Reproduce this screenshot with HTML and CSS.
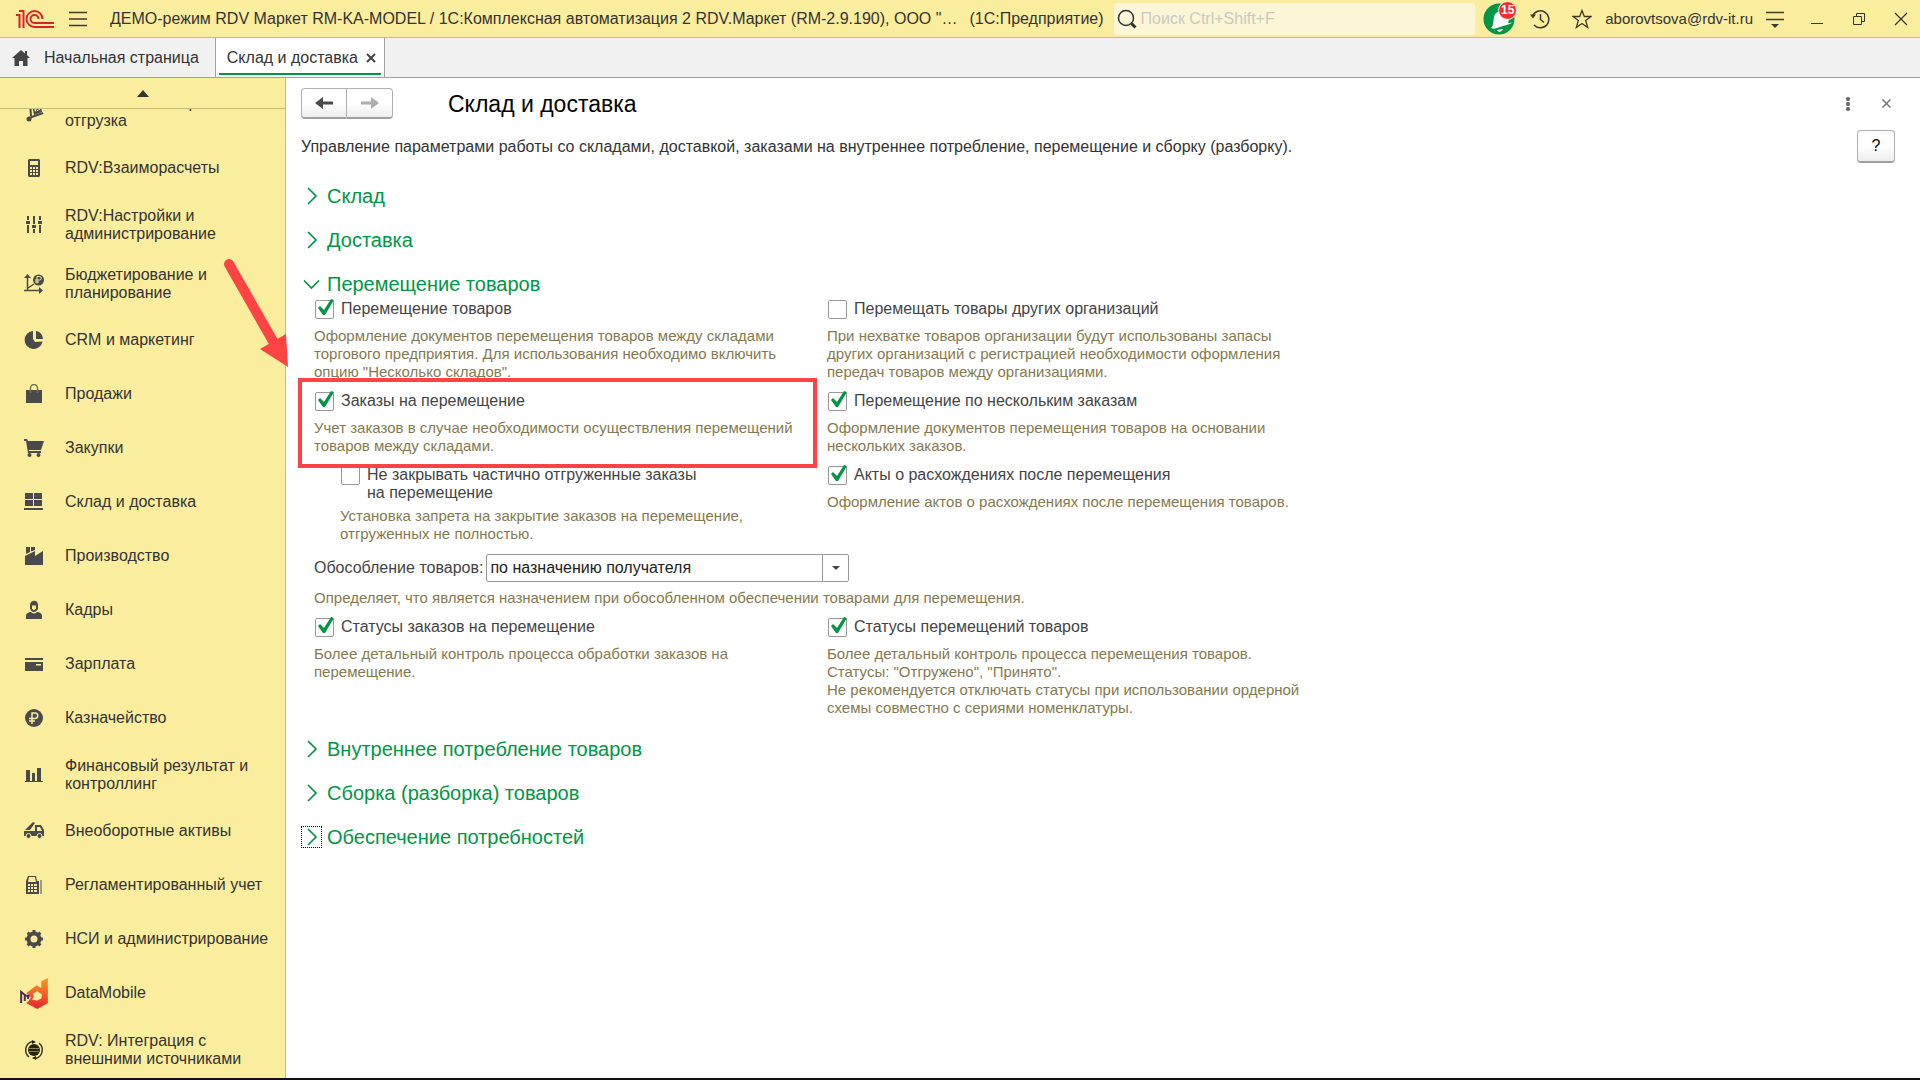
FILE: index.html
```html
<!DOCTYPE html>
<html lang="ru">
<head>
<meta charset="utf-8">
<title>Склад и доставка</title>
<link rel="stylesheet" href="styles.css">
</head>
<body>
<header class="topbar">
  <svg class="logo" viewBox="0 0 38 20" width="38" height="20" fill="none" stroke="#d8232a" stroke-width="2"><path d="M0 6h3.500V19M3 2h4.500V19"/><path d="M26.500 10a8 8 0 1 0-8 8H38"/><path d="M22.500 10a4 4 0 1 0-4 4H38"/></svg>
  <button class="icon-btn menu-btn" aria-label="Меню"><svg viewBox="0 0 18 16" width="18" height="16" stroke="#3d3a2c" stroke-width="1.500"><path d="M0 1.500h18M0 8h18M0 14.500h18"/></svg></button>
  <span class="app-title">ДЕМО-режим RDV Маркет RM-KA-MODEL / 1С:Комплексная автоматизация 2 RDV.Маркет (RM-2.9.190), ООО "…</span>
  <span class="app-kind">(1С:Предприятие)</span>
  <label class="search">
    <svg viewBox="0 0 20 20" width="20" height="20" fill="none" stroke="#333"><circle cx="9" cy="9" r="7.500" stroke-width="1.500"/><path d="m14.500 14.500 4 4" stroke-width="3"/></svg>
    <input type="text" placeholder="Поиск Ctrl+Shift+F" aria-label="Поиск">
  </label>
  <button class="icon-btn bell" aria-label="Уведомления"><svg viewBox="0 0 32 32" width="32" height="32"><circle cx="16" cy="16" r="15.500" fill="#009646"/><path d="M8 25c3-3 2-7 3-11 1-5 6-7 10-5s6 7 4 11c4 0 5-1 6-2-3 3-7 4-11 5-4 1-8 4-12 2z" fill="#fff"/><path d="M14 27c1 3 5 2 6-1z" fill="#fff"/></svg><span class="badge">15</span></button>
  <button class="icon-btn history" aria-label="История"><svg viewBox="0 0 20 20" width="20" height="20" fill="none" stroke="#3d3a2c" stroke-width="1.500"><path d="M4 16A8.500 8.500 0 1 0 2.500 7M10.500 5v5.500l3.500 3"/><path d="M0 5.500h6l-3 4z" fill="#3d3a2c" stroke="none"/></svg></button>
  <button class="icon-btn star" aria-label="Избранное"><svg viewBox="0 0 20 20" width="20" height="20" fill="none" stroke="#3d3a2c" stroke-width="1.300"><path d="m10 1.500 2.300 6h6.700l-5.300 4 2 7-5.700-4-5.700 4 2-7-5.300-4h6.700z"/></svg></button>
  <span class="user">aborovtsova@rdv-it.ru</span>
  <button class="icon-btn options" aria-label="Настройки"><svg viewBox="0 0 18 18" width="18" height="18"><path d="M0 2.500h18M0 9.500h18" stroke="#3d3a2c" stroke-width="1.500"/><path d="M5 14h8l-4 4z" fill="#3d3a2c"/></svg></button>
  <div class="window-btns">
    <button class="icon-btn" aria-label="Свернуть"><svg viewBox="0 0 14 14" width="14" height="14"><path d="M1 11.500h12" stroke="#3d3a2c"/></svg></button>
    <button class="icon-btn" aria-label="Восстановить"><svg viewBox="0 0 14 14" width="14" height="14" fill="none" stroke="#333"><path d="M1.500 4.500h8v8h-8zM4.500 4V1.500h8v8H10"/></svg></button>
    <button class="icon-btn" aria-label="Закрыть"><svg viewBox="0 0 14 14" width="14" height="14" stroke="#333" stroke-width="1.200"><path d="m1 1 12 12M13 1 1 13"/></svg></button>
  </div>
</header>
<nav class="tabs">
  <a class="tab home" href="#"><svg viewBox="0 0 18 16" width="18" height="16" fill="#444"><path d="M9 0 0 8h2.500v8h4.500v-5h4v5h4.500V8H18l-3-3V1h-2v2.500z"/></svg>Начальная страница</a>
  <div class="tab active"><a href="#">Склад и доставка</a><button class="icon-btn" aria-label="Закрыть вкладку"><svg viewBox="0 0 10 10" width="10" height="10" stroke="#444" stroke-width="2"><path d="m1 1 8 8M9 1 1 9"/></svg></button></div>
</nav>
<div class="workspace">
  <aside class="sidebar">
    <button class="scroll-up" aria-label="Прокрутить вверх"><svg viewBox="0 0 12 7" width="12" height="7"><path d="M0 7 6 0l6 7z" fill="#333"/></svg></button>
    <nav class="sections">
      <a class="section two" href="#"><svg class="ico" viewBox="0 0 20 20"><path d="m6 0 1 14M5 16l14-5" stroke="#4a4a4a" stroke-width="2"/><circle cx="5" cy="17" r="2.500"/><path fill-rule="evenodd" d="m8 3 8-2 2 9-8 3zm2 2 1 5 5-2-1-4z"/><path d="m10 5 6 4m-1-5-4 7" stroke="#4a4a4a"/></svg><span>RDV:Заказ и сборка отгрузка</span></a>
      <a class="section" href="#"><svg class="ico" viewBox="0 0 20 20"><path fill-rule="evenodd" d="M5 1h10l1 1v16l-1 1H5l-1-1V2zm1 2v4h8V3zm0 6v2h2V9zm3 0v2h2V9zm3 0v2h2V9zm-6 3v2h2v-2zm3 0v2h2v-2zm3 0v2h2v-2zm-6 3v2h2v-2zm3 0v2h2v-2zm3 0v2h2v-2z"/></svg><span>RDV:Взаиморасчеты</span></a>
      <a class="section two" href="#"><svg class="ico" viewBox="0 0 20 20"><path d="M3 1h2v4H3zM2 6h4v3H2zM3 10h2v8H3zM9 1h2v8H9zM8 10h4v3H8zM9 14h2v4H9zM15 1h2v4h-2zM14 6h4v3h-4zM15 10h2v8h-2z"/></svg><span>RDV:Настройки и администрирование</span></a>
      <a class="section two" href="#"><svg class="ico" viewBox="0 0 20 20"><path d="M3.500 2v15M0 16.500h17M4 14l6-4" stroke="#4a4a4a" stroke-width="1.500"/><path d="m0 4 3.500-4L7 4zM15 13l4 3.500-4 3.500z"/><circle cx="14.500" cy="6" r="5.500"/><path d="M13 9.500v-7h2.500a1.500 1.500 0 0 1 0 3.500H11m0 2h4" stroke="#fbed9e" fill="none"/></svg><span>Бюджетирование и планирование</span></a>
      <a class="section" href="#"><svg class="ico" viewBox="0 0 20 20"><path d="M9 1a9 9 0 1 0 9.500 10.500L11 12 9 9z"/><path d="M12 1a8 8 0 0 1 7 8h-7z"/></svg><span>CRM и маркетинг</span></a>
      <a class="section" href="#"><svg class="ico" viewBox="0 0 20 20"><path d="M2 6h16v13H2z"/><path d="M6.500 9V4a3.500 3.500 0 0 1 7 0v5" fill="none" stroke="#77725a" stroke-width="1.500"/></svg><span>Продажи</span></a>
      <a class="section" href="#"><svg class="ico" viewBox="0 0 20 20"><path d="M0 1h3l1 2h16l-3 9H5v1h12v2H4L2 3H0z"/><circle cx="5.500" cy="17" r="2"/><circle cx="14.500" cy="17" r="2"/></svg><span>Закупки</span></a>
      <a class="section" href="#"><svg class="ico" viewBox="0 0 20 20"><path d="M1 1h8v6H1zM10 1h8v6h-8zM1 8h8v6H1zM10 8h8v6h-8zM0 16h19v2H0z"/></svg><span>Склад и доставка</span></a>
      <a class="section" href="#"><svg class="ico" viewBox="0 0 20 20"><path d="M1 19v-9l10-5v5l8-5v14zM2 1h4v5L2 8zM7 1h4v3L7 5.500z"/></svg><span>Производство</span></a>
      <a class="section" href="#"><svg class="ico" viewBox="0 0 20 20"><path d="M6 5c0-5 8-6 8 0v3c0 2-2 4-4 4S6 10 6 8zM2 19v-3c0-3 3-4 5-4 2 2 4 2 6 0 2 0 5 1 5 4v3z"/><path d="M8 5.500h4v3l-2 2-2-2z" fill="#fbed9e"/></svg><span>Кадры</span></a>
      <a class="section" href="#"><svg class="ico" viewBox="0 0 20 20"><path fill-rule="evenodd" d="M1 4h18v2H1zM1 8h18v9H1zm11 2v1.500h5V10z"/></svg><span>Зарплата</span></a>
      <a class="section" href="#"><svg class="ico" viewBox="0 0 20 20"><circle cx="10" cy="10" r="9"/><path d="M8 16V5h3.500a2.800 2.800 0 0 1 0 5.500H5M5 13h6" fill="none" stroke="#fbed9e" stroke-width="1.500"/></svg><span>Казначейство</span></a>
      <a class="section two" href="#"><svg class="ico" viewBox="0 0 20 20"><path d="M2 5h4v11H2zM8 8h3v8H8zM13 3h4v13h-4zM1 16h18v1H1z"/></svg><span>Финансовый результат и контроллинг</span></a>
      <a class="section" href="#"><svg class="ico" viewBox="0 0 20 20"><path d="m1 9 8-8 2 1-5 7z"/><path fill-rule="evenodd" d="M0 10h11V4h6l3 5v6H0zm13-4v4h5l-2-4z"/><circle cx="4.500" cy="15" r="2.500" stroke="#fbed9e"/><circle cx="15.500" cy="15" r="2.500" stroke="#fbed9e"/></svg><span>Внеоборотные активы</span></a>
      <a class="section" href="#"><svg class="ico" viewBox="0 0 20 20"><path fill-rule="evenodd" d="M4 1h8l1 5h2v13H2V6zm1 1-1 5h8l-1-5zM4 9v2h2V9zm3 0v2h2V9zm3 0v2h3V9zm-6 3v2h2v-2zm3 0v2h2v-2zm3 0v2h3v-2zm-6 3v2h2v-2zm3 0v2h2v-2zm3 0v2h3v-2zM16.500 5v14h1V5z"/></svg><span>Регламентированный учет</span></a>
      <a class="section" href="#"><svg class="ico" viewBox="0 0 20 20"><circle cx="10" cy="10" r="5.500" fill="none" stroke="#4a4a4a" stroke-width="4"/><path d="M10 1v4M10 15v4M1 10h4M15 10h4M3.600 3.600l3 3M13.400 13.400l3 3M3.600 16.400l3-3M13.400 6.600l3-3" stroke="#4a4a4a" stroke-width="3"/></svg><span>НСИ и администрирование</span></a>
      <a class="section" href="#"><svg class="ico brand" viewBox="0 0 84 94"><defs><linearGradient id="dm" x1="0" y1="0" x2="0" y2="1"><stop offset="0" stop-color="#f39a24"/><stop offset=".5" stop-color="#f0622a"/><stop offset="1" stop-color="#ea2030"/></linearGradient></defs><path fill="url(#dm)" fill-rule="evenodd" d="M64 10 84 0v76L52 94 18 76l8-6 6-10-4-8-10-6 32-24 14 8zM38 48l4 8-6 10 16 2 12-6 2-12-14-10z"/><path d="M3 76V42l14 12 12 0M14 70V54M24 64V54" stroke="#4b2a63" stroke-width="6" fill="none"/></svg><span>DataMobile</span></a>
      <a class="section two" href="#"><svg class="ico" viewBox="0 0 20 20"><circle cx="10" cy="10" r="6" fill="#25230f"/><path d="M5 8.500h10M5 11.500h10" stroke="#8b8355"/><path d="M8 1.500a9 9 0 0 0-3 15.500M12 18.500A9 9 0 0 0 15 3" fill="none" stroke="#3d3a22" stroke-width="1.500"/><path d="m8 0 4 2-4 2zM12 16v4l-4-2z" fill="#25230f"/></svg><span>RDV: Интеграция с внешними источниками</span></a>
    </nav>
  </aside>
  <main class="page">
    <div class="page-head">
      <div class="nav-btns">
        <button aria-label="Назад"><svg viewBox="0 0 18 14" width="18" height="14"><path d="M8 1v4.500h10v3H8V13L0 7z" fill="#4a4a4a"/></svg></button>
        <button aria-label="Вперед"><svg viewBox="0 0 18 14" width="18" height="14"><path d="M10 1v4.500H0v3h10V13l8-6z" fill="#adadad"/></svg></button>
      </div>
      <h1>Склад и доставка</h1>
      <button class="icon-btn more" aria-label="Еще"><svg viewBox="0 0 4 14" width="4" height="14" fill="#666"><circle cx="2" cy="2" r="2"/><circle cx="2" cy="7" r="2"/><circle cx="2" cy="12" r="2"/></svg></button>
      <button class="icon-btn close" aria-label="Закрыть"><svg viewBox="0 0 9 9" width="9" height="9" stroke="#777" stroke-width="1.500"><path d="m.5.5 8 8M8.500.5l-8 8"/></svg></button>
    </div>
    <div class="intro">
      <p>Управление параметрами работы со складами, доставкой, заказами на внутреннее потребление, перемещение и сборку (разборку).</p>
      <button class="help">?</button>
    </div>
    <div class="groups">
      <button class="group"><svg viewBox="0 0 21 22"><path d="m7 3 8 8-8 8"/></svg>Склад</button>
      <button class="group"><svg viewBox="0 0 21 22"><path d="m7 3 8 8-8 8"/></svg>Доставка</button>
      <section class="open-group">
        <button class="group"><svg viewBox="0 0 21 22"><path d="m3 7.500 7.500 7.500L18 7.500"/></svg>Перемещение товаров</button>
        <div class="settings">
          <div class="cell">
            <label class="check"><input type="checkbox" checked>Перемещение товаров</label>
            <p class="hint">Оформление документов перемещения товаров между складами<br>торгового предприятия. Для использования необходимо включить<br>опцию "Несколько складов".</p>
          </div>
          <div class="cell">
            <label class="check"><input type="checkbox">Перемещать товары других организаций</label>
            <p class="hint">При нехватке товаров организации будут использованы запасы<br>других организаций с регистрацией необходимости оформления<br>передач товаров между организациями.</p>
          </div>
          <div class="cell marked">
            <label class="check"><input type="checkbox" checked>Заказы на перемещение</label>
            <p class="hint">Учет заказов в случае необходимости осуществления перемещений<br>товаров между складами.</p>
            <div class="frame"></div>
            <svg class="pointer" viewBox="0 0 70 112" width="70" height="112"><path d="M9 7 54 86" stroke="#fe4344" stroke-width="10" stroke-linecap="round"/><path d="M68 110 40 92l26-15z" fill="#fe4344"/></svg>
          </div>
          <div class="cell">
            <label class="check"><input type="checkbox" checked>Перемещение по нескольким заказам</label>
            <p class="hint">Оформление документов перемещения товаров на основании<br>нескольких заказов.</p>
          </div>
          <div class="cell nested">
            <label class="check"><input type="checkbox"><span>Не закрывать частично отгруженные заказы<br>на перемещение</span></label>
            <p class="hint">Установка запрета на закрытие заказов на перемещение,<br>отгруженных не полностью.</p>
          </div>
          <div class="cell">
            <label class="check"><input type="checkbox" checked>Акты о расхождениях после перемещения</label>
            <p class="hint">Оформление актов о расхождениях после перемещения товаров.</p>
          </div>
          <div class="cell wide">
            <div class="field">
              <label for="separation">Обособление товаров:</label>
              <div class="combo">
                <select id="separation"><option>по назначению получателя</option></select>
                <span class="drop"><svg viewBox="0 0 8 4" width="8" height="4"><path d="M0 0h8L4 4z" fill="#444"/></svg></span>
              </div>
            </div>
            <p class="hint">Определяет, что является назначением при обособленном обеспечении товарами для перемещения.</p>
          </div>
          <div class="cell">
            <label class="check"><input type="checkbox" checked>Статусы заказов на перемещение</label>
            <p class="hint">Более детальный контроль процесса обработки заказов на<br>перемещение.</p>
          </div>
          <div class="cell">
            <label class="check"><input type="checkbox" checked>Статусы перемещений товаров</label>
            <p class="hint">Более детальный контроль процесса перемещения товаров.<br>Статусы: "Отгружено", "Принято".<br>Не рекомендуется отключать статусы при использовании ордерной<br>схемы совместно с сериями номенклатуры.</p>
          </div>
        </div>
      </section>
      <button class="group"><svg viewBox="0 0 21 22"><path d="m7 3 8 8-8 8"/></svg>Внутреннее потребление товаров</button>
      <button class="group"><svg viewBox="0 0 21 22"><path d="m7 3 8 8-8 8"/></svg>Сборка (разборка) товаров</button>
      <button class="group current"><svg viewBox="0 0 21 22"><path d="m7 3 8 8-8 8"/></svg>Обеспечение потребностей</button>
    </div>
  </main>
</div>
<footer class="edge"></footer>
</body>
</html>
```
FILE: styles.css
```css
* { box-sizing: border-box; }
body {
  margin: 0;
  height: 100vh;
  display: flex;
  flex-direction: column;
  background: #fff;
  color: #333;
  font: 16px/18px "Liberation Sans", Arial, sans-serif;
}
button, input, select { font: inherit; color: inherit; }
button { cursor: pointer; }
a { color: inherit; text-decoration: none; }
p, h1 { margin: 0; font-weight: normal; }
svg { display: block; flex: none; }
.icon-btn { border: 0; padding: 0; background: none; flex: none; }

.topbar {
  flex: none;
  height: 38px;
  display: flex;
  align-items: center;
  padding: 0 12px 0 16px;
  background: #fbed9e;
  border-bottom: 1px solid #cdbe6c;
}
.menu-btn { margin: 0 23px 0 15px; }
.app-title {
  flex: 0 1 auto;
  min-width: 0;
  overflow: hidden;
  white-space: nowrap;
  text-overflow: ellipsis;
}
.app-kind { margin: 0 10px 0 12px; white-space: nowrap; }
.search {
  flex: 1;
  min-width: 0;
  height: 32px;
  display: flex;
  align-items: center;
  gap: 4px;
  padding-left: 3px;
  border-radius: 3px;
  background: #fdf6d6;
}
.search input {
  flex: 1;
  min-width: 0;
  border: 0;
  padding: 0;
  background: none;
  outline: 0;
}
.search input::placeholder { color: #c9c9c4; opacity: 1; }
.bell { position: relative; margin: 0 15px 0 8px; }
.badge {
  position: absolute;
  top: -2px;
  right: -2px;
  width: 19px;
  height: 19px;
  border-radius: 50%;
  background: #fb2a2a;
  border: 1px solid #fff;
  color: #fff;
  font: bold 12px/17px "Liberation Sans", Arial, sans-serif;
}
.star { margin: 0 13px 0 22px; }
.user { font-size: 15px; }
.options { margin: 0 26px 0 13px; }
.window-btns { display: flex; gap: 28px; }

.tabs {
  flex: none;
  height: 40px;
  display: flex;
  background: #f1f1f1;
  border-bottom: 1px solid #a0a0a0;
}
.tab { display: flex; align-items: center; }
.home { gap: 14px; padding: 0 16px 0 12px; }
.active {
  gap: 8px;
  padding: 0 8px 0 11px;
  background: linear-gradient(#009646, #009646) 3px 35px / calc(100% - 6px) 2px no-repeat #fff;
  border: solid #a0a0a0;
  border-width: 0 1px;
}

.workspace { flex: 1; min-height: 0; display: flex; }
.sidebar {
  flex: none;
  width: 286px;
  display: flex;
  flex-direction: column;
  background: #fbed9e;
  border-right: 1px solid #c9bd7c;
}
.scroll-up {
  flex: none;
  height: 31px;
  display: flex;
  align-items: center;
  justify-content: center;
  border: 0;
  border-bottom: 1px solid #c9bd7c;
  background: none;
}
.sections {
  flex: 1;
  min-height: 0;
  overflow: hidden;
  display: flex;
  flex-direction: column;
  justify-content: flex-end;
}
.section {
  flex: none;
  height: 54px;
  display: flex;
  align-items: center;
  padding: 2px 10px 0 20px;
}
.section.two { height: 59px; padding-top: 3px; }
.ico { width: 20px; height: 20px; margin: 0 21px 0 4px; fill: #4a4a4a; }
.ico.brand { width: 28px; height: 31px; margin: 0 17px 0 0; }

.page { flex: 1; min-width: 0; padding: 10px 25px 0 15px; }
.page-head { display: flex; align-items: center; height: 31px; }
.nav-btns { display: flex; }
.nav-btns button, .help {
  display: flex;
  align-items: center;
  justify-content: center;
  padding: 0;
  border: 1px solid #b0b0b0;
  border-bottom: 2px solid #a0a0a0;
  border-radius: 4px;
  background: linear-gradient(#fff 50%, #ededed);
}
.nav-btns button { width: 46px; height: 31px; }
.nav-btns button:first-child { border-radius: 4px 0 0 4px; }
.nav-btns button:last-child { border-radius: 0 4px 4px 0; border-left: 0; }
h1 { margin-left: 55px; font-size: 23px; line-height: 28px; color: #000; flex: 1; }
.more { margin-right: 32px; }
.close { margin-right: 4px; }
.intro { display: flex; align-items: center; justify-content: space-between; margin-top: 11px; }
.help { width: 38px; height: 33px; color: #000; }

.groups { display: flex; flex-direction: column; gap: 20px; margin-top: 21px; }
.group {
  height: 24px;
  align-self: flex-start;
  display: flex;
  align-items: center;
  gap: 5px;
  padding: 0;
  border: 0;
  background: none;
  font-size: 20px;
  line-height: 24px;
  color: #009646;
  white-space: nowrap;
}
.group svg { width: 21px; height: 22px; fill: none; stroke: #009646; stroke-width: 1.7; }
.current svg { outline: 1px dotted #000; outline-offset: -1px; }

.settings {
  display: grid;
  grid-template-columns: 513px 513px;
  row-gap: 11px;
  margin-top: 4px;
  padding-left: 13px;
}
.cell { position: relative; }
.nested { padding-left: 26px; }
.nested .hint { margin-top: 5px; }
.wide { grid-column: 1 / -1; }
.wide .hint { margin-top: 7px; }
.check { display: flex; align-items: flex-start; gap: 7px; color: #444; min-height: 19px; }
.check input {
  appearance: none;
  flex: none;
  position: relative;
  width: 19px;
  height: 19px;
  margin: 0 0 0 1px;
  border: 1px solid #999;
  border-radius: 2px;
  background: #fff;
}
.check input:checked::after {
  content: "";
  position: absolute;
  left: -1px;
  top: -2px;
  width: 19px;
  height: 17px;
  background: #009646;
  clip-path: polygon(3px 9px, 5px 7px, 9px 11px, 16px 0, 19px 1px, 10px 16px, 8px 16px);
}
.hint { margin-top: 8px; font-size: 15px; color: #857a4e; white-space: nowrap; }
.field { display: flex; align-items: center; gap: 3px; color: #444; }
.combo { position: relative; width: 363px; height: 28px; }
.combo select {
  appearance: none;
  width: 100%;
  height: 100%;
  padding: 0 30px 0 3px;
  border: 1px solid #999;
  border-radius: 2px;
  background: #fff;
  color: #222;
}
.drop {
  position: absolute;
  top: 1px;
  right: 1px;
  bottom: 1px;
  width: 26px;
  display: flex;
  align-items: center;
  justify-content: center;
  border-left: 1px solid #999;
  pointer-events: none;
}

/* Callout drawn over the form */
.frame {
  position: absolute;
  left: -16px;
  top: -14px;
  width: 519px;
  height: 90px;
  border: 4px solid #fe4344;
  z-index: 2;
  pointer-events: none;
}
.pointer { position: absolute; left: -94px; top: -135px; z-index: 2; pointer-events: none; }

.edge { flex: none; height: 2px; background: #111; }
```
